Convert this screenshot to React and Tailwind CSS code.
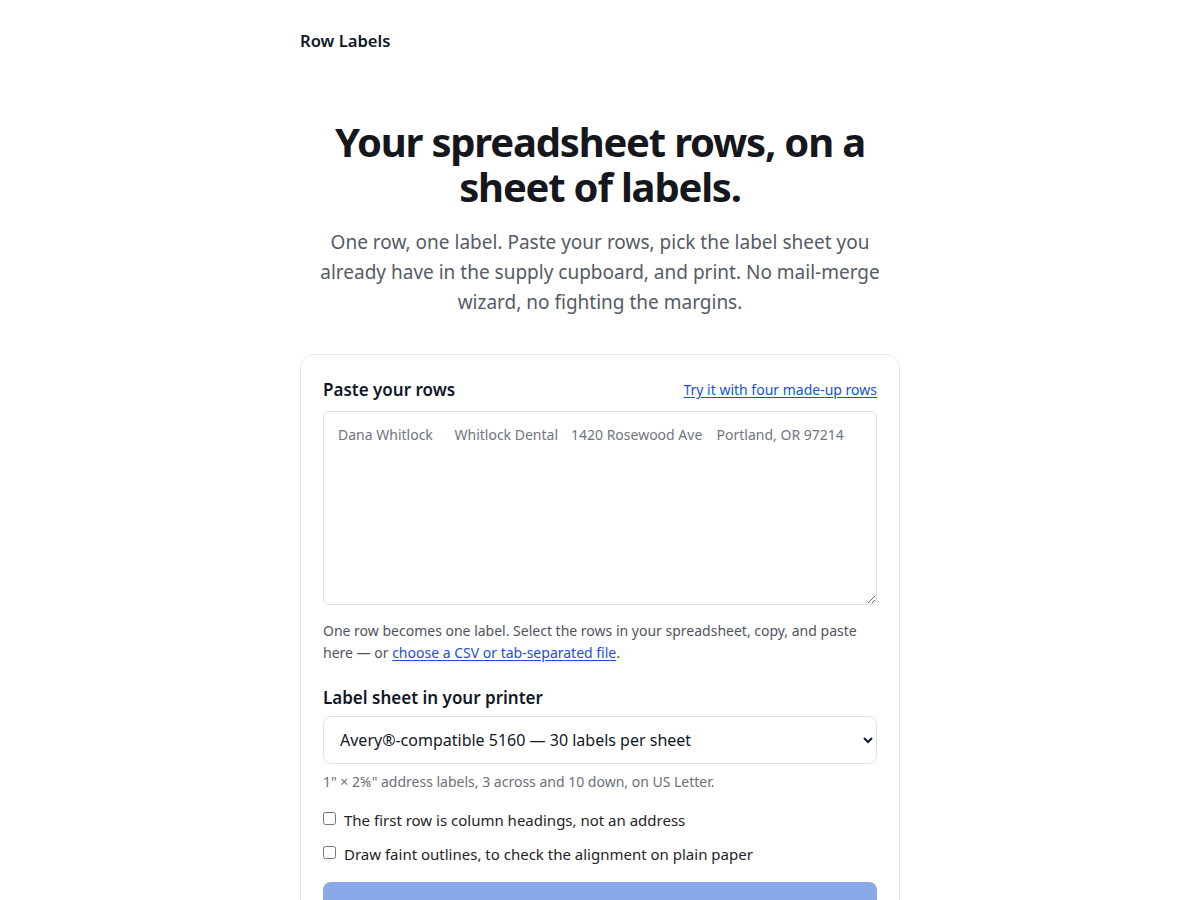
import React, { useState } from "react";

const SAMPLE_PLACEHOLDER = "Dana Whitlock\tWhitlock Dental\t1420 Rosewood Ave\tPortland, OR 97214";

const App = () => {
  const [rows, setRows] = useState("");
  const [sheet, setSheet] = useState("5160");
  const [hasHeadings, setHasHeadings] = useState(false);
  const [outlines, setOutlines] = useState(false);

  return (
    <div
      className="min-h-screen bg-white text-gray-900"
      style={{ fontFamily: '"Noto Sans", "Liberation Sans", sans-serif' }}
    >
      <div className="mx-auto w-[600px] pt-[29px] pb-16">
        {/* Header */}
        <header>
          <span className="text-[16.6px] font-semibold leading-6">Row Labels</span>
        </header>

        {/* Hero */}
        <section className="mt-[66px] text-center">
          <h1 className="text-[40px] font-bold leading-[45px] tracking-[-0.03em] text-[#15171c]">
            Your spreadsheet rows, on a sheet of labels.
          </h1>
          <p className="mt-[18px] text-[19px] leading-[30px] text-[#555b66]">
            One row, one label. Paste your rows, pick the label sheet you already have in the supply cupboard, and
            print. No mail-merge wizard, no fighting the margins.
          </p>
        </section>

        {/* Card */}
        <section className="mt-[37px] rounded-[14px] border border-[#e5e7eb] px-[22px] pt-[21px] pb-[22px]">
          <div className="flex items-center justify-between">
            <h2 className="text-[17px] font-semibold leading-[27px]">Paste your rows</h2>
            <button className="text-sm text-[#1d4ed8] underline underline-offset-2">
              Try it with four made-up rows
            </button>
          </div>
          <textarea
            className="mt-2 block h-[194px] w-full rounded-md border border-[#dcdfe4] px-[14px] py-3 text-sm leading-[22px] [tab-size:8] text-gray-900 placeholder:text-[#71757d] focus:outline-none"
            placeholder={SAMPLE_PLACEHOLDER}
            value={rows}
            onChange={(e) => setRows(e.target.value)}
          />
          <p className="mt-[15px] text-sm leading-[22px] text-[#4f5561]">
            One row becomes one label. Select the rows in your spreadsheet, copy, and paste here — or{" "}
            <a href="#" className="text-[#1d4ed8] underline underline-offset-2">
              choose a CSV or tab-separated file
            </a>
            .
          </p>

          <h2 className="mt-5 text-[17px] font-semibold leading-[27px]">Label sheet in your printer</h2>
          <select
            className="mt-[5px] block h-12 w-full rounded-lg border border-[#dcdfe4] bg-white pl-3 pr-2 text-base text-gray-900"
            value={sheet}
            onChange={(e) => setSheet(e.target.value)}
          >
            <option value="5160">Avery®-compatible 5160 — 30 labels per sheet</option>
            <option value="5161">Avery®-compatible 5161 — 20 labels per sheet</option>
            <option value="5163">Avery®-compatible 5163 — 10 labels per sheet</option>
          </select>
          <p className="mt-2 text-sm leading-5 text-[#6b7079]">
            1" × 2⅝" address labels, 3 across and 10 down, on US Letter.
          </p>

          <div className="mt-4 flex flex-col gap-[10px]">
            <label className="flex items-start gap-2 text-[15px] leading-6 text-[#1f2328]">
              <input
                type="checkbox"
                className="mt-[4px] h-[13px] w-[13px]"
                checked={hasHeadings}
                onChange={(e) => setHasHeadings(e.target.checked)}
              />
              The first row is column headings, not an address
            </label>
            <label className="flex items-start gap-2 text-[15px] leading-6 text-[#1f2328]">
              <input
                type="checkbox"
                className="mt-[4px] h-[13px] w-[13px]"
                checked={outlines}
                onChange={(e) => setOutlines(e.target.checked)}
              />
              Draw faint outlines, to check the alignment on plain paper
            </label>
          </div>

          <button
            disabled
            className="mt-4 h-14 w-full rounded-lg bg-[#8aa9e8] text-base font-semibold text-white"
          >
            Make the label sheet
          </button>
        </section>
      </div>
    </div>
  );
};

export default App;
